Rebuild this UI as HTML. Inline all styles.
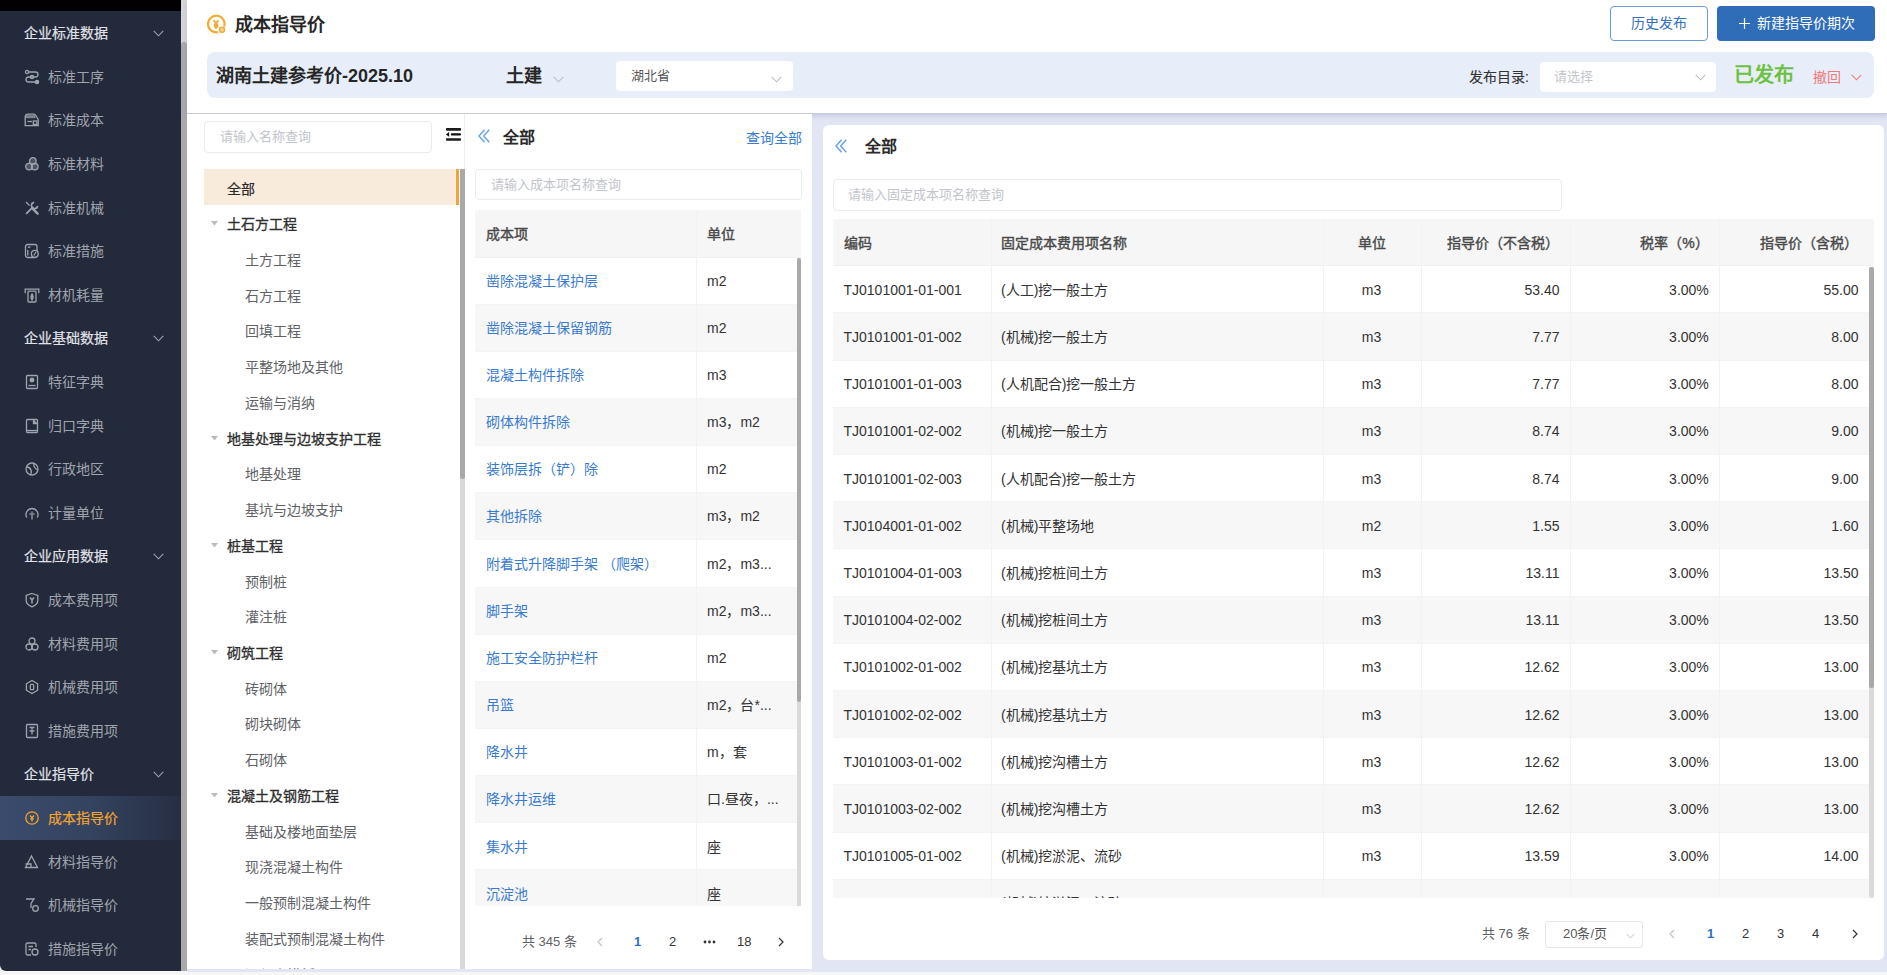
<!DOCTYPE html>
<html lang="zh-CN"><head><meta charset="utf-8"><title>成本指导价</title>
<style>
*{box-sizing:border-box;margin:0;padding:0}
html,body{width:1887px;height:975px;overflow:hidden;background:#f6f6f6;font-family:"Liberation Sans",sans-serif;color:#333}
.abs{position:absolute}
.t{position:absolute;white-space:nowrap}
#sb{left:0;top:0;width:181px;height:971px;background:#232a3b;border-bottom-left-radius:6px;overflow:hidden}
.row{position:absolute;left:0;width:181px;height:20px;font-size:14px;line-height:20px;white-space:nowrap}
.row span{position:absolute;top:0}
.grp span{left:24px;color:#e1e2e8;-webkit-text-stroke:0.2px #e1e2e8}
.itm span{left:48px;color:#a0a4ae}
.row svg{position:absolute;left:24px;top:2px;width:16px;height:16px}
.grp svg{left:153px;top:7px;width:11px;height:7px}
.act{color:#f2a531!important;-webkit-text-stroke:0.2px #f2a531}
.md{-webkit-text-stroke:0.35px currentColor}
</style></head><body>
<div class="abs" style="left:187px;top:0;width:1700px;height:971.5px;background:#e2e5f3"></div>
<div id="sb" class="abs">
<div class="abs" style="left:0;top:0;width:181px;height:11px;background:#030003"></div>
<div class="abs" style="left:0;top:796px;width:181px;height:43.5px;background:linear-gradient(90deg,#3b4b6c 0%,#34435f 50%,#262e42 100%)"></div>
<div class="row grp" style="top:23.2px"><span>企业标准数据</span><svg viewBox="0 0 11 7"><path d="M0.7 0.8 L5.5 5.8 L10.3 0.8" fill="none" stroke="#9ea3ad" stroke-width="1.1"/></svg></div>
<div class="row itm" style="top:66.8px"><svg viewBox="0 0 16 16" fill="none" stroke="#a0a4ae" stroke-width="1.3"><circle cx="3" cy="3" r="1.6"/><path d="M5 3H11.5 Q14 3 14 5.5 Q14 8 11.5 8 H4.5 Q2 8 2 10.5 Q2 13 4.5 13 H11"/><circle cx="13" cy="13" r="1.6" fill="#a0a4ae"/><circle cx="8" cy="8" r="1.6"/></svg><span class="">标准工序</span></div>
<div class="row itm" style="top:110.4px"><svg viewBox="0 0 16 16" fill="none" stroke="#a0a4ae" stroke-width="1.3"><path d="M1.2 13.6 V5 Q1.2 2.2 4 2.2 H9.5 Q11.2 2.2 12 3.8 L14.2 7.5 V13.6 Z"/><path d="M1.8 3.2 H11.5 V6.2 H1.8Z" fill="#a0a4ae" stroke="none" opacity=".75"/><path d="M3.5 9.5H8"/><rect x="9.3" y="9" width="3.6" height="3.4"/></svg><span class="">标准成本</span></div>
<div class="row itm" style="top:154.0px"><svg viewBox="0 0 16 16" fill="none" stroke="#a0a4ae" stroke-width="1.3"><circle cx="5" cy="10.6" r="3.3" fill="#a0a4ae" fill-opacity=".35"/><circle cx="10.8" cy="10.6" r="3.3" fill="#a0a4ae" fill-opacity=".35"/><circle cx="8.8" cy="5" r="3.3" fill="#a0a4ae" fill-opacity=".35"/></svg><span class="">标准材料</span></div>
<div class="row itm" style="top:197.6px"><svg viewBox="0 0 16 16" fill="none" stroke="#a0a4ae" stroke-width="1.3"><path d="M2 2 L5.5 5.5"/><path d="M8.2 8.2 L13.6 13.6" stroke-width="2.4" stroke-linecap="round"/><path d="M2.6 13.4 L8.6 7.4" stroke-width="1.8" stroke-linecap="round"/><path d="M10.2 2.4 A3.1 3.1 0 1 0 13.6 5.8" stroke-width="1.6"/></svg><span class="">标准机械</span></div>
<div class="row itm" style="top:241.2px"><svg viewBox="0 0 16 16" fill="none" stroke="#a0a4ae" stroke-width="1.3"><rect x="1.5" y="1.5" width="11.5" height="13" rx="2"/><path d="M3.8 4.2H6.5M3.8 7V12.5"/><circle cx="10.8" cy="10.8" r="3.4" fill="#232a3b"/><path d="M9.8 12.5 L12 9"/></svg><span class="">标准措施</span></div>
<div class="row itm" style="top:284.8px"><svg viewBox="0 0 16 16" fill="none" stroke="#a0a4ae" stroke-width="1.3"><path d="M1.2 6.2 V2.2 H14.8 V6.2"/><rect x="4" y="4.2" width="8" height="10.8" rx="0.8"/><path d="M8 7 Q10.2 10 8 13 Q6 10 8 7Z" fill="#a0a4ae"/></svg><span class="">材机耗量</span></div>
<div class="row grp" style="top:328.4px"><span>企业基础数据</span><svg viewBox="0 0 11 7"><path d="M0.7 0.8 L5.5 5.8 L10.3 0.8" fill="none" stroke="#9ea3ad" stroke-width="1.1"/></svg></div>
<div class="row itm" style="top:372.0px"><svg viewBox="0 0 16 16" fill="none" stroke="#a0a4ae" stroke-width="1.3"><rect x="2.5" y="1.5" width="11" height="13" rx="1"/><circle cx="8" cy="6" r="1.8" fill="#a0a4ae"/><path d="M4.5 11.5H11.5"/></svg><span class="">特征字典</span></div>
<div class="row itm" style="top:415.6px"><svg viewBox="0 0 16 16" fill="none" stroke="#a0a4ae" stroke-width="1.3"><rect x="2.5" y="1.5" width="11" height="13" rx="1"/><path d="M9.5 1.5 V5.5 H13.5" fill="#a0a4ae"/><path d="M2.5 12.5H13.5"/></svg><span class="">归口字典</span></div>
<div class="row itm" style="top:459.2px"><svg viewBox="0 0 16 16" fill="none" stroke="#a0a4ae" stroke-width="1.3"><circle cx="8" cy="8" r="6"/><path d="M2.5 6 Q6 6 7 9 Q8 12 6 14"/><path d="M10 2.5 Q9 6 13.5 9"/></svg><span class="">行政地区</span></div>
<div class="row itm" style="top:502.8px"><svg viewBox="0 0 16 16" fill="none" stroke="#a0a4ae" stroke-width="1.3"><path d="M2.8 12.5 A6 6 0 1 1 13.2 12.5"/><path d="M8 6.5 V14.5"/><path d="M5.6 8.4 L6.6 9.6 M10.4 8.4 L9.4 9.6"/></svg><span class="">计量单位</span></div>
<div class="row grp" style="top:546.4px"><span>企业应用数据</span><svg viewBox="0 0 11 7"><path d="M0.7 0.8 L5.5 5.8 L10.3 0.8" fill="none" stroke="#9ea3ad" stroke-width="1.1"/></svg></div>
<div class="row itm" style="top:590.0px"><svg viewBox="0 0 16 16" fill="none" stroke="#a0a4ae" stroke-width="1.3"><path d="M8 1.5 L13.8 3.5 V8.5 Q13.8 12.5 8 14.8 Q2.2 12.5 2.2 8.5 V3.5Z"/><path d="M6 5.5 L8 8 L10 5.5 M8 8 V11.5" stroke-width="1.5"/></svg><span class="">成本费用项</span></div>
<div class="row itm" style="top:633.6px"><svg viewBox="0 0 16 16" fill="none" stroke="#a0a4ae" stroke-width="1.3"><circle cx="5" cy="11" r="3"/><circle cx="11" cy="11" r="3"/><circle cx="8" cy="5" r="3"/></svg><span class="">材料费用项</span></div>
<div class="row itm" style="top:677.2px"><svg viewBox="0 0 16 16" fill="none" stroke="#a0a4ae" stroke-width="1.3"><path d="M8 1.5 L13.6 4.75 V11.25 L8 14.5 L2.4 11.25 V4.75Z"/><rect x="6.3" y="5.3" width="3.4" height="5.4" rx="1.2"/></svg><span class="">机械费用项</span></div>
<div class="row itm" style="top:720.8px"><svg viewBox="0 0 16 16" fill="none" stroke="#a0a4ae" stroke-width="1.3"><rect x="2.5" y="1.5" width="11" height="13" rx="1"/><path d="M5.5 4.5H10.5M8 4.5V11.5M5.5 8H10.5"/></svg><span class="">措施费用项</span></div>
<div class="row grp" style="top:764.4px"><span>企业指导价</span><svg viewBox="0 0 11 7"><path d="M0.7 0.8 L5.5 5.8 L10.3 0.8" fill="none" stroke="#9ea3ad" stroke-width="1.1"/></svg></div>
<div class="row itm" style="top:808.0px"><svg viewBox="0 0 16 16" fill="none" stroke="#f2a531" stroke-width="1.3"><circle cx="8" cy="8" r="6.2"/><path d="M6 5.5L8 8L10 5.5M8 8V11.5M6.3 9H9.7"/></svg><span class="act">成本指导价</span></div>
<div class="row itm" style="top:851.6px"><svg viewBox="0 0 16 16" fill="none" stroke="#a0a4ae" stroke-width="1.3"><path d="M7.5 2 L13.5 13.5 H1.5Z"/><path d="M1.5 10H7V13.5"/></svg><span class="">材料指导价</span></div>
<div class="row itm" style="top:895.2px"><svg viewBox="0 0 16 16" fill="none" stroke="#a0a4ae" stroke-width="1.3"><path d="M2 2H10L7 6.5V11"/><circle cx="11.5" cy="11.5" r="2.8"/></svg><span class="">机械指导价</span></div>
<div class="row itm" style="top:938.8px"><svg viewBox="0 0 16 16" fill="none" stroke="#a0a4ae" stroke-width="1.3"><path d="M12 6 V3.5 Q12 2 10.5 2 H3.5 Q2 2 2 3.5 V12.5 Q2 14 3.5 14 H7"/><path d="M4.5 5.5H9M4.5 8.5H7"/><circle cx="11" cy="11" r="3"/></svg><span class="">措施指导价</span></div>
</div>
<div class="abs" style="left:181px;top:0;width:6px;height:971px;background:#d6d6d8"></div>
<div class="abs" style="left:181px;top:42px;width:6px;height:929px;background:#a9a9aa;border-radius:3px 3px 0 0"></div>
<div class="abs" style="left:187px;top:0;width:1700px;height:114px;background:#fff;border-bottom:1px solid #c6cadb;box-shadow:0 2px 5px rgba(120,130,180,.28)"></div>
<svg class="abs" style="left:205px;top:13px" width="22" height="22" viewBox="0 0 22 22">
 <path d="M19.2 13.6 A8.3 8.3 0 1 0 13.2 19.1" fill="none" stroke="#f3aa32" stroke-width="2.1"/>
 <path d="M8.6 7.2 L11 10.2 L13.4 7.2" fill="none" stroke="#f3aa32" stroke-width="1.8"/>
 <path d="M11 9.5 V15.8 M8.8 11.5 H13.2 M8.8 13.6 H13.2" fill="none" stroke="#f3aa32" stroke-width="2"/>
 <circle cx="17" cy="16.8" r="2.6" fill="#f9d08c" stroke="#f3aa32" stroke-width="1.3"/>
</svg>
<div class="t" style="left:235px;top:14px;font-size:18px;line-height:22px;font-weight:bold;color:#262626">成本指导价</div>
<div class="abs" style="left:1610px;top:6px;width:98px;height:35px;border:1px solid #6b9ad8;border-radius:4px;color:#3370c0;font-size:14px;line-height:33px;text-align:center">历史发布</div>
<div class="abs" style="left:1717px;top:6px;width:158px;height:35px;background:#2f6db9;border-radius:4px;color:#fff;font-size:14px;line-height:35px"><svg style="position:absolute;left:22px;top:12px" width="11" height="11" viewBox="0 0 11 11"><path d="M5.5 0V11M0 5.5H11" stroke="#fff" stroke-width="1.2"/></svg><span style="position:absolute;left:40px;top:0">新建指导价期次</span></div>
<div class="abs" style="left:207px;top:52px;width:1667px;height:46px;background:#e7eef9;border-radius:8px"></div>
<div class="t" style="left:216px;top:64.5px;font-size:18px;line-height:22px;font-weight:bold;color:#262626">湖南土建参考价-2025.10</div>
<div class="t" style="left:506px;top:64.5px;font-size:18px;line-height:22px;font-weight:bold;color:#262626">土建</div>
<svg class="abs" style="left:553px;top:76px" width="11" height="7" viewBox="0 0 11 7"><path d="M0.7 0.8 L5.5 5.8 L10.3 0.8" fill="none" stroke="#b9bfca" stroke-width="1.1"/></svg>
<div class="abs" style="left:616px;top:61px;width:177px;height:30px;background:#fff;border-radius:4px"></div>
<div class="t" style="left:631px;top:68px;font-size:13px;line-height:16px;color:#555">湖北省</div>
<svg class="abs" style="left:771px;top:76px" width="11" height="7" viewBox="0 0 11 7"><path d="M0.7 0.8 L5.5 5.8 L10.3 0.8" fill="none" stroke="#b9bfca" stroke-width="1.1"/></svg>
<div class="t" style="left:1469px;top:67px;font-size:14px;line-height:20px;color:#333;-webkit-text-stroke:0.15px #333">发布目录:</div>
<div class="abs" style="left:1540px;top:62px;width:176px;height:30px;background:#fff;border-radius:4px"></div>
<div class="t" style="left:1554px;top:69px;font-size:13px;line-height:16px;color:#c3c6cd">请选择</div>
<svg class="abs" style="left:1695px;top:74px" width="11" height="7" viewBox="0 0 11 7"><path d="M0.7 0.8 L5.5 5.8 L10.3 0.8" fill="none" stroke="#b9bfca" stroke-width="1.1"/></svg>
<div class="t" style="left:1734px;top:63px;font-size:20px;line-height:24px;font-weight:bold;color:#6cc142">已发布</div>
<div class="t" style="left:1813px;top:67px;font-size:14px;line-height:20px;color:#f07a7a">撤回</div>
<svg class="abs" style="left:1851px;top:74px" width="11" height="7" viewBox="0 0 11 7"><path d="M0.7 0.8 L5.5 5.8 L10.3 0.8" fill="none" stroke="#f07a7a" stroke-width="1.1"/></svg>
<div class="abs" style="left:187px;top:114px;width:278px;height:855px;background:#fff;border-right:1px solid #eceef4"></div>
<div class="abs" style="left:204px;top:121px;width:228px;height:31.5px;border:1px solid #e9ebf0;border-radius:4px"></div>
<div class="t" style="left:220px;top:128px;font-size:13px;line-height:18px;color:#c2c5cc">请输入名称查询</div>
<svg class="abs" style="left:445px;top:127px" width="17" height="15" viewBox="0 0 17 15"><rect x="1" y="1" width="15" height="2.7" rx="0.8" fill="#1c1c1c"/><rect x="5.8" y="6.3" width="10.2" height="2.2" rx="1" fill="#111"/><path d="M0.9 7.4 L4.1 5 V9.8Z" fill="#111"/><rect x="1" y="11.3" width="15" height="2.5" rx="0.8" fill="#1c1c1c"/></svg>
<div class="abs" style="left:187px;top:169px;width:278px;height:800px;overflow:hidden">
<div class="abs" style="left:17px;top:0;width:255px;height:36.4px;background:#f8ebdc;border-right:3px solid #f0a53c"></div>
<div class="t" style="left:40px;top:9.5px;font-size:14px;line-height:20px;color:#2a2a2a;-webkit-text-stroke:0.2px #2a2a2a">全部</div>
<svg class="abs" style="left:24px;top:52.2px" width="7" height="5" viewBox="0 0 7 5"><path d="M0 0H7L3.5 4.5Z" fill="#b8bbc2"/></svg>
<div class="t" style="left:40px;top:45.2px;font-size:14px;line-height:20px;color:#2e2e2e;-webkit-text-stroke:0.3px #2e2e2e">土石方工程</div>
<div class="t" style="left:58px;top:81.0px;font-size:14px;line-height:20px;color:#606266">土方工程</div>
<div class="t" style="left:58px;top:116.7px;font-size:14px;line-height:20px;color:#606266">石方工程</div>
<div class="t" style="left:58px;top:152.4px;font-size:14px;line-height:20px;color:#606266">回填工程</div>
<div class="t" style="left:58px;top:188.1px;font-size:14px;line-height:20px;color:#606266">平整场地及其他</div>
<div class="t" style="left:58px;top:223.9px;font-size:14px;line-height:20px;color:#606266">运输与消纳</div>
<svg class="abs" style="left:24px;top:266.6px" width="7" height="5" viewBox="0 0 7 5"><path d="M0 0H7L3.5 4.5Z" fill="#b8bbc2"/></svg>
<div class="t" style="left:40px;top:259.6px;font-size:14px;line-height:20px;color:#2e2e2e;-webkit-text-stroke:0.3px #2e2e2e">地基处理与边坡支护工程</div>
<div class="t" style="left:58px;top:295.3px;font-size:14px;line-height:20px;color:#606266">地基处理</div>
<div class="t" style="left:58px;top:331.1px;font-size:14px;line-height:20px;color:#606266">基坑与边坡支护</div>
<svg class="abs" style="left:24px;top:373.8px" width="7" height="5" viewBox="0 0 7 5"><path d="M0 0H7L3.5 4.5Z" fill="#b8bbc2"/></svg>
<div class="t" style="left:40px;top:366.8px;font-size:14px;line-height:20px;color:#2e2e2e;-webkit-text-stroke:0.3px #2e2e2e">桩基工程</div>
<div class="t" style="left:58px;top:402.5px;font-size:14px;line-height:20px;color:#606266">预制桩</div>
<div class="t" style="left:58px;top:438.3px;font-size:14px;line-height:20px;color:#606266">灌注桩</div>
<svg class="abs" style="left:24px;top:481.0px" width="7" height="5" viewBox="0 0 7 5"><path d="M0 0H7L3.5 4.5Z" fill="#b8bbc2"/></svg>
<div class="t" style="left:40px;top:474.0px;font-size:14px;line-height:20px;color:#2e2e2e;-webkit-text-stroke:0.3px #2e2e2e">砌筑工程</div>
<div class="t" style="left:58px;top:509.7px;font-size:14px;line-height:20px;color:#606266">砖砌体</div>
<div class="t" style="left:58px;top:545.4px;font-size:14px;line-height:20px;color:#606266">砌块砌体</div>
<div class="t" style="left:58px;top:581.2px;font-size:14px;line-height:20px;color:#606266">石砌体</div>
<svg class="abs" style="left:24px;top:623.9px" width="7" height="5" viewBox="0 0 7 5"><path d="M0 0H7L3.5 4.5Z" fill="#b8bbc2"/></svg>
<div class="t" style="left:40px;top:616.9px;font-size:14px;line-height:20px;color:#2e2e2e;-webkit-text-stroke:0.3px #2e2e2e">混凝土及钢筋工程</div>
<div class="t" style="left:58px;top:652.6px;font-size:14px;line-height:20px;color:#606266">基础及楼地面垫层</div>
<div class="t" style="left:58px;top:688.4px;font-size:14px;line-height:20px;color:#606266">现浇混凝土构件</div>
<div class="t" style="left:58px;top:724.1px;font-size:14px;line-height:20px;color:#606266">一般预制混凝土构件</div>
<div class="t" style="left:58px;top:759.8px;font-size:14px;line-height:20px;color:#606266">装配式预制混凝土构件</div>
<div class="t" style="left:58px;top:795.6px;font-size:14px;line-height:20px;color:#606266">混凝土模板</div>
<div class="abs" style="left:272.5px;top:0;width:5.5px;height:802px;background:#d8d9db;border-radius:3px"></div>
<div class="abs" style="left:272.5px;top:0;width:5.5px;height:310px;background:#a9a9aa;border-radius:0 0 3px 3px"></div>
</div>
<div class="abs" style="left:465px;top:114px;width:346.5px;height:855px;background:#fff"></div>
<svg class="abs" style="left:478px;top:129px" width="13" height="14" viewBox="0 0 13 14"><path d="M6.6 0.8 L1 7 L6.6 13.2 M11.3 0.8 L5.7 7 L11.3 13.2" fill="none" stroke="#6aa6e6" stroke-width="1.5"/></svg>
<div class="t" style="left:503px;top:126.5px;font-size:16px;line-height:22px;color:#2a2a2a;font-weight:bold">全部</div>
<div class="t" style="left:746px;top:127.5px;font-size:14px;line-height:20px;color:#3a7dd3">查询全部</div>
<div class="abs" style="left:475px;top:168.5px;width:327px;height:31.5px;border:1px solid #e9ebf0;border-radius:4px"></div>
<div class="t" style="left:491px;top:176px;font-size:13px;line-height:18px;color:#c2c5cc">请输入成本项名称查询</div>
<div class="abs" style="left:475px;top:210px;width:326px;height:696px;overflow:hidden">
<div class="abs" style="left:0;top:0;width:326px;height:47.5px;background:#f6f6f7;border-bottom:1px solid #eef0f3"></div>
<div class="t" style="left:11px;top:13.5px;font-size:14px;line-height:20px;color:#4a4a4a;-webkit-text-stroke:0.4px #4a4a4a">成本项</div>
<div class="t" style="left:232px;top:13.5px;font-size:14px;line-height:20px;color:#4a4a4a;-webkit-text-stroke:0.4px #4a4a4a">单位</div>
<div class="abs" style="left:0;top:47.50px;width:322px;height:47.15px;background:#fff;border-bottom:1px solid #f2f3f6"></div>
<div class="t" style="left:11px;top:60.7px;font-size:14px;line-height:20px;color:#3a7bd0">凿除混凝土保护层</div>
<div class="t" style="left:232px;top:60.7px;font-size:14px;line-height:20px;color:#333">m2</div>
<div class="abs" style="left:0;top:94.65px;width:322px;height:47.15px;background:#f7f7f8;border-bottom:1px solid #f2f3f6"></div>
<div class="t" style="left:11px;top:107.9px;font-size:14px;line-height:20px;color:#3a7bd0">凿除混凝土保留钢筋</div>
<div class="t" style="left:232px;top:107.9px;font-size:14px;line-height:20px;color:#333">m2</div>
<div class="abs" style="left:0;top:141.80px;width:322px;height:47.15px;background:#fff;border-bottom:1px solid #f2f3f6"></div>
<div class="t" style="left:11px;top:155.0px;font-size:14px;line-height:20px;color:#3a7bd0">混凝土构件拆除</div>
<div class="t" style="left:232px;top:155.0px;font-size:14px;line-height:20px;color:#333">m3</div>
<div class="abs" style="left:0;top:188.95px;width:322px;height:47.15px;background:#f7f7f8;border-bottom:1px solid #f2f3f6"></div>
<div class="t" style="left:11px;top:202.1px;font-size:14px;line-height:20px;color:#3a7bd0">砌体构件拆除</div>
<div class="t" style="left:232px;top:202.1px;font-size:14px;line-height:20px;color:#333">m3，m2</div>
<div class="abs" style="left:0;top:236.10px;width:322px;height:47.15px;background:#fff;border-bottom:1px solid #f2f3f6"></div>
<div class="t" style="left:11px;top:249.3px;font-size:14px;line-height:20px;color:#3a7bd0">装饰层拆（铲）除</div>
<div class="t" style="left:232px;top:249.3px;font-size:14px;line-height:20px;color:#333">m2</div>
<div class="abs" style="left:0;top:283.25px;width:322px;height:47.15px;background:#f7f7f8;border-bottom:1px solid #f2f3f6"></div>
<div class="t" style="left:11px;top:296.4px;font-size:14px;line-height:20px;color:#3a7bd0">其他拆除</div>
<div class="t" style="left:232px;top:296.4px;font-size:14px;line-height:20px;color:#333">m3，m2</div>
<div class="abs" style="left:0;top:330.40px;width:322px;height:47.15px;background:#fff;border-bottom:1px solid #f2f3f6"></div>
<div class="t" style="left:11px;top:343.6px;font-size:14px;line-height:20px;color:#3a7bd0">附着式升降脚手架 （爬架）</div>
<div class="t" style="left:232px;top:343.6px;font-size:14px;line-height:20px;color:#333">m2，m3...</div>
<div class="abs" style="left:0;top:377.55px;width:322px;height:47.15px;background:#f7f7f8;border-bottom:1px solid #f2f3f6"></div>
<div class="t" style="left:11px;top:390.8px;font-size:14px;line-height:20px;color:#3a7bd0">脚手架</div>
<div class="t" style="left:232px;top:390.8px;font-size:14px;line-height:20px;color:#333">m2，m3...</div>
<div class="abs" style="left:0;top:424.70px;width:322px;height:47.15px;background:#fff;border-bottom:1px solid #f2f3f6"></div>
<div class="t" style="left:11px;top:437.9px;font-size:14px;line-height:20px;color:#3a7bd0">施工安全防护栏杆</div>
<div class="t" style="left:232px;top:437.9px;font-size:14px;line-height:20px;color:#333">m2</div>
<div class="abs" style="left:0;top:471.85px;width:322px;height:47.15px;background:#f7f7f8;border-bottom:1px solid #f2f3f6"></div>
<div class="t" style="left:11px;top:485.0px;font-size:14px;line-height:20px;color:#3a7bd0">吊篮</div>
<div class="t" style="left:232px;top:485.0px;font-size:14px;line-height:20px;color:#333">m2，台*...</div>
<div class="abs" style="left:0;top:519.00px;width:322px;height:47.15px;background:#fff;border-bottom:1px solid #f2f3f6"></div>
<div class="t" style="left:11px;top:532.2px;font-size:14px;line-height:20px;color:#3a7bd0">降水井</div>
<div class="t" style="left:232px;top:532.2px;font-size:14px;line-height:20px;color:#333">m，套</div>
<div class="abs" style="left:0;top:566.15px;width:322px;height:47.15px;background:#f7f7f8;border-bottom:1px solid #f2f3f6"></div>
<div class="t" style="left:11px;top:579.4px;font-size:14px;line-height:20px;color:#3a7bd0">降水井运维</div>
<div class="t" style="left:232px;top:579.4px;font-size:14px;line-height:20px;color:#333">口.昼夜，...</div>
<div class="abs" style="left:0;top:613.30px;width:322px;height:47.15px;background:#fff;border-bottom:1px solid #f2f3f6"></div>
<div class="t" style="left:11px;top:626.5px;font-size:14px;line-height:20px;color:#3a7bd0">集水井</div>
<div class="t" style="left:232px;top:626.5px;font-size:14px;line-height:20px;color:#333">座</div>
<div class="abs" style="left:0;top:660.45px;width:322px;height:47.15px;background:#f7f7f8;border-bottom:1px solid #f2f3f6"></div>
<div class="t" style="left:11px;top:673.6px;font-size:14px;line-height:20px;color:#3a7bd0">沉淀池</div>
<div class="t" style="left:232px;top:673.6px;font-size:14px;line-height:20px;color:#333">座</div>
<div class="abs" style="left:221px;top:0;width:1px;height:696px;background:#f1f2f6"></div>
<div class="abs" style="left:322px;top:47.5px;width:4px;height:650px;background:#dadadb"></div>
<div class="abs" style="left:322px;top:47.5px;width:4px;height:444px;background:#a9a9aa;border-radius:2px"></div>
</div>
<div class="t" style="left:522px;top:933px;font-size:13px;line-height:18px;color:#606266">共 345 条</div>
<svg class="abs" style="left:597px;top:937px" width="6" height="10" viewBox="0 0 6 10"><path d="M5 1 L1 5 L5 9" fill="none" stroke="#c0c4cc" stroke-width="1.2"/></svg>
<div class="t" style="left:634px;top:933px;font-size:13px;line-height:18px;color:#2f6fc4;font-weight:bold">1</div>
<div class="t" style="left:669px;top:933px;font-size:13px;line-height:18px;color:#333">2</div>
<svg class="abs" style="left:703px;top:940px" width="13" height="4" viewBox="0 0 13 4"><circle cx="2" cy="2" r="1.4" fill="#333"/><circle cx="6.5" cy="2" r="1.4" fill="#333"/><circle cx="11" cy="2" r="1.4" fill="#333"/></svg>
<div class="t" style="left:737px;top:933px;font-size:13px;line-height:18px;color:#333">18</div>
<svg class="abs" style="left:778px;top:937px" width="6" height="10" viewBox="0 0 6 10"><path d="M1 1 L5 5 L1 9" fill="none" stroke="#333" stroke-width="1.2"/></svg>
<div class="abs" style="left:822.5px;top:124.5px;width:1061.5px;height:835.5px;background:#fff;border-radius:6px"></div>
<svg class="abs" style="left:835px;top:139px" width="13" height="14" viewBox="0 0 13 14"><path d="M6.6 0.8 L1 7 L6.6 13.2 M11.3 0.8 L5.7 7 L11.3 13.2" fill="none" stroke="#6aa6e6" stroke-width="1.5"/></svg>
<div class="t" style="left:865px;top:136px;font-size:16px;line-height:22px;color:#2a2a2a;font-weight:bold">全部</div>
<div class="abs" style="left:833px;top:178.5px;width:729px;height:32px;border:1px solid #e9ebf0;border-radius:4px"></div>
<div class="t" style="left:848px;top:185.5px;font-size:13px;line-height:18px;color:#c2c5cc">请输入固定成本项名称查询</div>
<div class="abs" style="left:833px;top:219px;width:1041px;height:679px;overflow:hidden">
<div class="abs" style="left:0;top:0;width:1041px;height:47.2px;background:#f6f6f7;border-bottom:1px solid #eef0f3"></div>
<div class="t" style="left:10.5px;top:13.6px;font-size:14px;line-height:20px;color:#4a4a4a;-webkit-text-stroke:0.4px #4a4a4a;">编码</div>
<div class="t" style="left:168.1px;top:13.6px;font-size:14px;line-height:20px;color:#4a4a4a;-webkit-text-stroke:0.4px #4a4a4a;">固定成本费用项名称</div>
<div class="t" style="left:489.5px;width:98.2px;text-align:center;top:13.6px;font-size:14px;line-height:20px;color:#4a4a4a;-webkit-text-stroke:0.4px #4a4a4a;">单位</div>
<div class="t" style="left:587.7px;width:138.8px;text-align:right;top:13.6px;font-size:14px;line-height:20px;color:#4a4a4a;-webkit-text-stroke:0.4px #4a4a4a;">指导价（不含税）</div>
<div class="t" style="left:737.0px;width:138.8px;text-align:right;top:13.6px;font-size:14px;line-height:20px;color:#4a4a4a;-webkit-text-stroke:0.4px #4a4a4a;">税率（%）</div>
<div class="t" style="left:886.3px;width:139.2px;text-align:right;top:13.6px;font-size:14px;line-height:20px;color:#4a4a4a;-webkit-text-stroke:0.4px #4a4a4a;">指导价（含税）</div>
<div class="abs" style="left:0;top:47.20px;width:1036px;height:47.2px;background:#fff;border-bottom:1px solid #f2f3f6"></div>
<div class="t" style="left:10.5px;top:60.8px;font-size:14px;line-height:20px;color:#333;">TJ0101001-01-001</div>
<div class="t" style="left:168.1px;top:60.8px;font-size:14px;line-height:20px;color:#333;">(人工)挖一般土方</div>
<div class="t" style="left:489.5px;width:98.2px;text-align:center;top:60.8px;font-size:14px;line-height:20px;color:#333;">m3</div>
<div class="t" style="left:587.7px;width:138.8px;text-align:right;top:60.8px;font-size:14px;line-height:20px;color:#333;">53.40</div>
<div class="t" style="left:737.0px;width:138.8px;text-align:right;top:60.8px;font-size:14px;line-height:20px;color:#333;">3.00%</div>
<div class="t" style="left:886.3px;width:139.2px;text-align:right;top:60.8px;font-size:14px;line-height:20px;color:#333;">55.00</div>
<div class="abs" style="left:0;top:94.40px;width:1036px;height:47.2px;background:#f7f7f8;border-bottom:1px solid #f2f3f6"></div>
<div class="t" style="left:10.5px;top:108.0px;font-size:14px;line-height:20px;color:#333;">TJ0101001-01-002</div>
<div class="t" style="left:168.1px;top:108.0px;font-size:14px;line-height:20px;color:#333;">(机械)挖一般土方</div>
<div class="t" style="left:489.5px;width:98.2px;text-align:center;top:108.0px;font-size:14px;line-height:20px;color:#333;">m3</div>
<div class="t" style="left:587.7px;width:138.8px;text-align:right;top:108.0px;font-size:14px;line-height:20px;color:#333;">7.77</div>
<div class="t" style="left:737.0px;width:138.8px;text-align:right;top:108.0px;font-size:14px;line-height:20px;color:#333;">3.00%</div>
<div class="t" style="left:886.3px;width:139.2px;text-align:right;top:108.0px;font-size:14px;line-height:20px;color:#333;">8.00</div>
<div class="abs" style="left:0;top:141.60px;width:1036px;height:47.2px;background:#fff;border-bottom:1px solid #f2f3f6"></div>
<div class="t" style="left:10.5px;top:155.2px;font-size:14px;line-height:20px;color:#333;">TJ0101001-01-003</div>
<div class="t" style="left:168.1px;top:155.2px;font-size:14px;line-height:20px;color:#333;">(人机配合)挖一般土方</div>
<div class="t" style="left:489.5px;width:98.2px;text-align:center;top:155.2px;font-size:14px;line-height:20px;color:#333;">m3</div>
<div class="t" style="left:587.7px;width:138.8px;text-align:right;top:155.2px;font-size:14px;line-height:20px;color:#333;">7.77</div>
<div class="t" style="left:737.0px;width:138.8px;text-align:right;top:155.2px;font-size:14px;line-height:20px;color:#333;">3.00%</div>
<div class="t" style="left:886.3px;width:139.2px;text-align:right;top:155.2px;font-size:14px;line-height:20px;color:#333;">8.00</div>
<div class="abs" style="left:0;top:188.80px;width:1036px;height:47.2px;background:#f7f7f8;border-bottom:1px solid #f2f3f6"></div>
<div class="t" style="left:10.5px;top:202.4px;font-size:14px;line-height:20px;color:#333;">TJ0101001-02-002</div>
<div class="t" style="left:168.1px;top:202.4px;font-size:14px;line-height:20px;color:#333;">(机械)挖一般土方</div>
<div class="t" style="left:489.5px;width:98.2px;text-align:center;top:202.4px;font-size:14px;line-height:20px;color:#333;">m3</div>
<div class="t" style="left:587.7px;width:138.8px;text-align:right;top:202.4px;font-size:14px;line-height:20px;color:#333;">8.74</div>
<div class="t" style="left:737.0px;width:138.8px;text-align:right;top:202.4px;font-size:14px;line-height:20px;color:#333;">3.00%</div>
<div class="t" style="left:886.3px;width:139.2px;text-align:right;top:202.4px;font-size:14px;line-height:20px;color:#333;">9.00</div>
<div class="abs" style="left:0;top:236.00px;width:1036px;height:47.2px;background:#fff;border-bottom:1px solid #f2f3f6"></div>
<div class="t" style="left:10.5px;top:249.6px;font-size:14px;line-height:20px;color:#333;">TJ0101001-02-003</div>
<div class="t" style="left:168.1px;top:249.6px;font-size:14px;line-height:20px;color:#333;">(人机配合)挖一般土方</div>
<div class="t" style="left:489.5px;width:98.2px;text-align:center;top:249.6px;font-size:14px;line-height:20px;color:#333;">m3</div>
<div class="t" style="left:587.7px;width:138.8px;text-align:right;top:249.6px;font-size:14px;line-height:20px;color:#333;">8.74</div>
<div class="t" style="left:737.0px;width:138.8px;text-align:right;top:249.6px;font-size:14px;line-height:20px;color:#333;">3.00%</div>
<div class="t" style="left:886.3px;width:139.2px;text-align:right;top:249.6px;font-size:14px;line-height:20px;color:#333;">9.00</div>
<div class="abs" style="left:0;top:283.20px;width:1036px;height:47.2px;background:#f7f7f8;border-bottom:1px solid #f2f3f6"></div>
<div class="t" style="left:10.5px;top:296.8px;font-size:14px;line-height:20px;color:#333;">TJ0104001-01-002</div>
<div class="t" style="left:168.1px;top:296.8px;font-size:14px;line-height:20px;color:#333;">(机械)平整场地</div>
<div class="t" style="left:489.5px;width:98.2px;text-align:center;top:296.8px;font-size:14px;line-height:20px;color:#333;">m2</div>
<div class="t" style="left:587.7px;width:138.8px;text-align:right;top:296.8px;font-size:14px;line-height:20px;color:#333;">1.55</div>
<div class="t" style="left:737.0px;width:138.8px;text-align:right;top:296.8px;font-size:14px;line-height:20px;color:#333;">3.00%</div>
<div class="t" style="left:886.3px;width:139.2px;text-align:right;top:296.8px;font-size:14px;line-height:20px;color:#333;">1.60</div>
<div class="abs" style="left:0;top:330.40px;width:1036px;height:47.2px;background:#fff;border-bottom:1px solid #f2f3f6"></div>
<div class="t" style="left:10.5px;top:344.0px;font-size:14px;line-height:20px;color:#333;">TJ0101004-01-003</div>
<div class="t" style="left:168.1px;top:344.0px;font-size:14px;line-height:20px;color:#333;">(机械)挖桩间土方</div>
<div class="t" style="left:489.5px;width:98.2px;text-align:center;top:344.0px;font-size:14px;line-height:20px;color:#333;">m3</div>
<div class="t" style="left:587.7px;width:138.8px;text-align:right;top:344.0px;font-size:14px;line-height:20px;color:#333;">13.11</div>
<div class="t" style="left:737.0px;width:138.8px;text-align:right;top:344.0px;font-size:14px;line-height:20px;color:#333;">3.00%</div>
<div class="t" style="left:886.3px;width:139.2px;text-align:right;top:344.0px;font-size:14px;line-height:20px;color:#333;">13.50</div>
<div class="abs" style="left:0;top:377.60px;width:1036px;height:47.2px;background:#f7f7f8;border-bottom:1px solid #f2f3f6"></div>
<div class="t" style="left:10.5px;top:391.2px;font-size:14px;line-height:20px;color:#333;">TJ0101004-02-002</div>
<div class="t" style="left:168.1px;top:391.2px;font-size:14px;line-height:20px;color:#333;">(机械)挖桩间土方</div>
<div class="t" style="left:489.5px;width:98.2px;text-align:center;top:391.2px;font-size:14px;line-height:20px;color:#333;">m3</div>
<div class="t" style="left:587.7px;width:138.8px;text-align:right;top:391.2px;font-size:14px;line-height:20px;color:#333;">13.11</div>
<div class="t" style="left:737.0px;width:138.8px;text-align:right;top:391.2px;font-size:14px;line-height:20px;color:#333;">3.00%</div>
<div class="t" style="left:886.3px;width:139.2px;text-align:right;top:391.2px;font-size:14px;line-height:20px;color:#333;">13.50</div>
<div class="abs" style="left:0;top:424.80px;width:1036px;height:47.2px;background:#fff;border-bottom:1px solid #f2f3f6"></div>
<div class="t" style="left:10.5px;top:438.4px;font-size:14px;line-height:20px;color:#333;">TJ0101002-01-002</div>
<div class="t" style="left:168.1px;top:438.4px;font-size:14px;line-height:20px;color:#333;">(机械)挖基坑土方</div>
<div class="t" style="left:489.5px;width:98.2px;text-align:center;top:438.4px;font-size:14px;line-height:20px;color:#333;">m3</div>
<div class="t" style="left:587.7px;width:138.8px;text-align:right;top:438.4px;font-size:14px;line-height:20px;color:#333;">12.62</div>
<div class="t" style="left:737.0px;width:138.8px;text-align:right;top:438.4px;font-size:14px;line-height:20px;color:#333;">3.00%</div>
<div class="t" style="left:886.3px;width:139.2px;text-align:right;top:438.4px;font-size:14px;line-height:20px;color:#333;">13.00</div>
<div class="abs" style="left:0;top:472.00px;width:1036px;height:47.2px;background:#f7f7f8;border-bottom:1px solid #f2f3f6"></div>
<div class="t" style="left:10.5px;top:485.6px;font-size:14px;line-height:20px;color:#333;">TJ0101002-02-002</div>
<div class="t" style="left:168.1px;top:485.6px;font-size:14px;line-height:20px;color:#333;">(机械)挖基坑土方</div>
<div class="t" style="left:489.5px;width:98.2px;text-align:center;top:485.6px;font-size:14px;line-height:20px;color:#333;">m3</div>
<div class="t" style="left:587.7px;width:138.8px;text-align:right;top:485.6px;font-size:14px;line-height:20px;color:#333;">12.62</div>
<div class="t" style="left:737.0px;width:138.8px;text-align:right;top:485.6px;font-size:14px;line-height:20px;color:#333;">3.00%</div>
<div class="t" style="left:886.3px;width:139.2px;text-align:right;top:485.6px;font-size:14px;line-height:20px;color:#333;">13.00</div>
<div class="abs" style="left:0;top:519.20px;width:1036px;height:47.2px;background:#fff;border-bottom:1px solid #f2f3f6"></div>
<div class="t" style="left:10.5px;top:532.8px;font-size:14px;line-height:20px;color:#333;">TJ0101003-01-002</div>
<div class="t" style="left:168.1px;top:532.8px;font-size:14px;line-height:20px;color:#333;">(机械)挖沟槽土方</div>
<div class="t" style="left:489.5px;width:98.2px;text-align:center;top:532.8px;font-size:14px;line-height:20px;color:#333;">m3</div>
<div class="t" style="left:587.7px;width:138.8px;text-align:right;top:532.8px;font-size:14px;line-height:20px;color:#333;">12.62</div>
<div class="t" style="left:737.0px;width:138.8px;text-align:right;top:532.8px;font-size:14px;line-height:20px;color:#333;">3.00%</div>
<div class="t" style="left:886.3px;width:139.2px;text-align:right;top:532.8px;font-size:14px;line-height:20px;color:#333;">13.00</div>
<div class="abs" style="left:0;top:566.40px;width:1036px;height:47.2px;background:#f7f7f8;border-bottom:1px solid #f2f3f6"></div>
<div class="t" style="left:10.5px;top:580.0px;font-size:14px;line-height:20px;color:#333;">TJ0101003-02-002</div>
<div class="t" style="left:168.1px;top:580.0px;font-size:14px;line-height:20px;color:#333;">(机械)挖沟槽土方</div>
<div class="t" style="left:489.5px;width:98.2px;text-align:center;top:580.0px;font-size:14px;line-height:20px;color:#333;">m3</div>
<div class="t" style="left:587.7px;width:138.8px;text-align:right;top:580.0px;font-size:14px;line-height:20px;color:#333;">12.62</div>
<div class="t" style="left:737.0px;width:138.8px;text-align:right;top:580.0px;font-size:14px;line-height:20px;color:#333;">3.00%</div>
<div class="t" style="left:886.3px;width:139.2px;text-align:right;top:580.0px;font-size:14px;line-height:20px;color:#333;">13.00</div>
<div class="abs" style="left:0;top:613.60px;width:1036px;height:47.2px;background:#fff;border-bottom:1px solid #f2f3f6"></div>
<div class="t" style="left:10.5px;top:627.2px;font-size:14px;line-height:20px;color:#333;">TJ0101005-01-002</div>
<div class="t" style="left:168.1px;top:627.2px;font-size:14px;line-height:20px;color:#333;">(机械)挖淤泥、流砂</div>
<div class="t" style="left:489.5px;width:98.2px;text-align:center;top:627.2px;font-size:14px;line-height:20px;color:#333;">m3</div>
<div class="t" style="left:587.7px;width:138.8px;text-align:right;top:627.2px;font-size:14px;line-height:20px;color:#333;">13.59</div>
<div class="t" style="left:737.0px;width:138.8px;text-align:right;top:627.2px;font-size:14px;line-height:20px;color:#333;">3.00%</div>
<div class="t" style="left:886.3px;width:139.2px;text-align:right;top:627.2px;font-size:14px;line-height:20px;color:#333;">14.00</div>
<div class="abs" style="left:0;top:660.80px;width:1036px;height:47.2px;background:#f7f7f8;border-bottom:1px solid #f2f3f6"></div>
<div class="t" style="left:10.5px;top:674.4px;font-size:14px;line-height:20px;color:#333;">TJ0101005-02-002</div>
<div class="t" style="left:168.1px;top:674.4px;font-size:14px;line-height:20px;color:#333;">(机械)挖淤泥、流砂</div>
<div class="t" style="left:489.5px;width:98.2px;text-align:center;top:674.4px;font-size:14px;line-height:20px;color:#333;">m3</div>
<div class="t" style="left:587.7px;width:138.8px;text-align:right;top:674.4px;font-size:14px;line-height:20px;color:#333;">13.59</div>
<div class="t" style="left:737.0px;width:138.8px;text-align:right;top:674.4px;font-size:14px;line-height:20px;color:#333;">3.00%</div>
<div class="t" style="left:886.3px;width:139.2px;text-align:right;top:674.4px;font-size:14px;line-height:20px;color:#333;">14.00</div>
<div class="abs" style="left:157.6px;top:0;width:1px;height:679px;background:#f1f2f6"></div>
<div class="abs" style="left:489.5px;top:0;width:1px;height:679px;background:#f1f2f6"></div>
<div class="abs" style="left:587.7px;top:0;width:1px;height:679px;background:#f1f2f6"></div>
<div class="abs" style="left:737.0px;top:0;width:1px;height:679px;background:#f1f2f6"></div>
<div class="abs" style="left:886.3px;top:0;width:1px;height:679px;background:#f1f2f6"></div>
<div class="abs" style="left:1036px;top:48px;width:4.5px;height:631px;background:#dadadb;border-radius:2px"></div>
<div class="abs" style="left:1036px;top:48px;width:4.5px;height:421px;background:#a9a9aa;border-radius:2px"></div>
</div>
<div class="t" style="left:1482px;top:925px;font-size:13px;line-height:18px;color:#606266">共 76 条</div>
<div class="abs" style="left:1544.5px;top:920.5px;width:98px;height:27px;border:1px solid #e4e6ec;border-radius:3px"></div>
<div class="t" style="left:1563px;top:925px;font-size:13px;line-height:18px;color:#555">20条/页</div>
<svg class="abs" style="left:1626px;top:933px" width="9" height="6" viewBox="0 0 9 6"><path d="M0.6 0.8 L4.5 5 L8.4 0.8" fill="none" stroke="#c0c4cc" stroke-width="1"/></svg>
<svg class="abs" style="left:1669px;top:929px" width="6" height="10" viewBox="0 0 6 10"><path d="M5 1 L1 5 L5 9" fill="none" stroke="#c0c4cc" stroke-width="1.2"/></svg>
<div class="t" style="left:1707px;top:925px;font-size:13px;line-height:18px;color:#2f6fc4;font-weight:bold">1</div>
<div class="t" style="left:1742px;top:925px;font-size:13px;line-height:18px;color:#333">2</div>
<div class="t" style="left:1777px;top:925px;font-size:13px;line-height:18px;color:#333">3</div>
<div class="t" style="left:1812px;top:925px;font-size:13px;line-height:18px;color:#333">4</div>
<svg class="abs" style="left:1852px;top:929px" width="6" height="10" viewBox="0 0 6 10"><path d="M1 1 L5 5 L1 9" fill="none" stroke="#333" stroke-width="1.2"/></svg>
</body></html>
